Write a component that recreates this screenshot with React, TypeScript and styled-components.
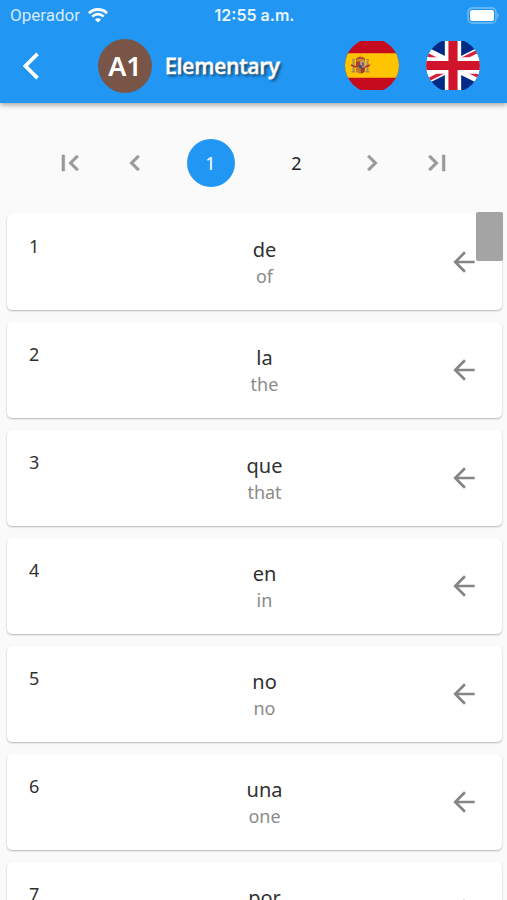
import React from "react";
import styled, { createGlobalStyle } from "styled-components";

const GlobalStyle = createGlobalStyle`
  * { box-sizing: border-box; }
  body {
    margin: 0;
    background: #fafafa;
    font-family: "Noto Sans", "Open Sans", sans-serif;
    color: #303030;
  }
  button {
    border: 0;
    padding: 0;
    background: none;
    font: inherit;
    color: inherit;
    cursor: pointer;
  }
  svg { display: block; }
`;

const Screen = styled.div`
  height: 100vh;
  display: flex;
  flex-direction: column;
  overflow: hidden;
`;

const Header = styled.header`
  flex: none;
  background: #2196f3;
  color: #fff;
  box-shadow: 0 2px 5px rgba(0, 0, 0, 0.35);
  z-index: 1;
`;

const StatusBar = styled.div`
  display: grid;
  grid-template-columns: 1fr auto 1fr;
  align-items: center;
  height: 30px;
  padding: 0 8px 0 10px;
  font-family: Inter, sans-serif;
  font-size: 16px;
`;

const Carrier = styled.div`
  display: flex;
  align-items: center;
  gap: 8px;
  font-family: Roboto, sans-serif;
  font-size: 17px;

  span { opacity: 0.8; }
`;

const Clock = styled.time`
  font-weight: 600;
  opacity: 0.9;
`;

const Battery = styled.svg`
  justify-self: end;
`;

const Toolbar = styled.div`
  display: flex;
  align-items: center;
  height: 73px;
  padding: 0 27px 2px 23px;
`;

const BackButton = styled.button`
  width: 75px;
  height: 48px;
  display: flex;
  align-items: center;
  stroke: currentColor;
`;

const LevelBadge = styled.div`
  display: flex;
  align-items: center;
  justify-content: center;
  width: 54px;
  height: 54px;
  border-radius: 50%;
  background: #795548;
  font-size: 27px;
  font-weight: 600;
`;

const Title = styled.h1`
  flex: 1;
  margin: 0 0 0 13px;
  font-size: 21px;
  line-height: 30px;
  font-weight: 500;
  text-shadow: 2px 2px 3px rgba(0, 0, 0, 0.65);
  -webkit-text-stroke: 1px #fff;
  paint-order: stroke fill;
`;

const Flags = styled.div`
  display: flex;
  gap: 27px;
`;

const Pager = styled.nav`
  flex: none;
  display: flex;
  justify-content: center;
  align-items: center;
  height: 111px;
  padding-top: 8px;
`;

const StepButton = styled.button`
  display: flex;
  align-items: center;
  justify-content: center;
  width: 65px;
  height: 48px;
  color: #999;
  stroke: currentColor;
`;

const PageButton = styled.button<{ $active?: boolean }>`
  width: 48px;
  height: 48px;
  margin: 0 19px;
  border-radius: 50%;
  font-size: 18px;
  background: ${(p) => (p.$active ? "#2196f3" : "transparent")};
  color: ${(p) => (p.$active ? "#fff" : "#222")};
`;

const ListArea = styled.main`
  flex: 1;
  min-height: 0;
  overflow: hidden;
`;

const WordList = styled.ol`
  display: flex;
  flex-direction: column;
  gap: 12px;
  list-style: none;
  margin: 0;
  padding: 0 5px 0 7px;
`;

const Card = styled.li`
  flex: none;
  display: grid;
  grid-template-columns: 52px 1fr 32px;
  align-items: center;
  height: 96px;
  padding: 0 22px;
  border-radius: 5px;
  background: #fff;
  box-shadow: 0 1px 2px rgba(0, 0, 0, 0.28);
`;

const Rank = styled.span`
  align-self: start;
  padding-top: 19px;
  font-size: 18px;
  line-height: 27px;
`;

const Entry = styled.div`
  padding-top: 2px;
  text-align: center;
  line-height: 27px;
`;

const Word = styled.div`
  font-size: 20px;
`;

const Translation = styled.div`
  font-size: 18px;
  color: #8a8a8a;
`;

const RevealButton = styled.button`
  color: #858585;
`;

const ListFrame = styled.div`
  position: relative;
  flex: 1;
  min-height: 0;
  display: flex;
  flex-direction: column;
`;

const ScrollThumb = styled.div`
  position: absolute;
  top: -2px;
  right: 4px;
  width: 27px;
  height: 49px;
  border-radius: 2px;
  background: #a4a4a4;
`;

const Icon = ({ d }: { d: string }) => (
  <svg width="32" height="32" viewBox="0 0 24 24" fill="currentColor" strokeWidth="0.4" overflow="visible" aria-hidden="true">
    <path d={d} />
  </svg>
);

const icons = {
  back: "M11.67 3.87L9.9 2.1 0 12l9.9 9.9 1.77-1.77L3.54 12z",
  first: "M18.41 16.59L13.82 12l4.59-4.59L17 6l-6 6 6 6zM6 6h2v12H6z",
  previous: "M15.41 7.41L14 6l-6 6 6 6 1.41-1.41L10.83 12z",
  next: "M10 6L8.59 7.41 13.17 12l-4.58 4.59L10 18l6-6z",
  last: "M5.59 7.41L10.18 12l-4.59 4.59L7 18l6-6-6-6zM16 6h2v12h-2z",
  arrow: "M20 11H7.83l5.59-5.59L12 4l-8 8 8 8 1.41-1.41L7.83 13H20v-2z",
};

const WifiIcon = () => (
  <svg width="20" height="15" viewBox="0 0 20 15" fill="none" stroke="#fff" aria-hidden="true">
    <path d="M1 5.2C6 .2 14 .2 19 5.2" strokeWidth="2.9" />
    <path d="M4.3 8.6c3.3-3.2 8.1-3.2 11.4 0" strokeWidth="2.7" />
    <path d="M10 14.6L6.9 11.4c1.8-1.6 4.4-1.6 6.2 0z" fill="#fff" stroke="none" />
  </svg>
);

const BatteryIcon = () => (
  <Battery width="33" height="17" viewBox="0 0 33 17" aria-hidden="true">
    <rect x="2" y="1" width="28" height="15" rx="4" fill="none" stroke="#fff" strokeOpacity="0.4" strokeWidth="1.3" />
    <rect x="4" y="3" width="24" height="11" rx="2" fill="#fff" />
    <path d="M31.3 6v5c1.8-.8 1.8-4.2 0-5z" fill="#fff" fillOpacity="0.4" />
  </Battery>
);

const SpainFlag = () => (
  <svg width="54" height="49" viewBox="0 0 54 49" role="img" aria-label="Español">
    <clipPath id="es-round"><circle cx="27" cy="24.5" r="27" /></clipPath>
    <g clipPath="url(#es-round)">
      <path fill="#c60b1e" d="M0 0h54v49H0z" />
      <path fill="#ffc400" d="M0 12.2h54v24.6H0z" />
      <g fill="#a88a5c">
        <path d="M7.5 20h2v10h-2zM21.5 20h2v10h-2z" />
        <path d="M6.5 30h4v1.6h-4zM20.5 30h4v1.6h-4zM7 18h3v1.4H7zM21 18h3v1.4h-3z" />
      </g>
      <path d="M6 24l5 2M20 26l5-2" stroke="#b5303a" strokeWidth="1.4" />
      <path fill="#b04a32" d="M11 19.5c-.5-3 2-3.8 4.5-3.8s5 .8 4.5 3.8z" />
      <path fill="#c58a2a" d="M12 18h7v1.4h-7zM14.9 14.5h1.2v2h-1.2z" />
      <path fill="#ad3a2e" d="M11 20.2h4.5v6H11z" />
      <path fill="#a99a9c" d="M15.5 20.2H20v6h-4.5z" />
      <path fill="#c17a24" d="M11 26.2h4.5v6.3c-2.8 0-4.5-1.3-4.5-3.5z" />
      <path fill="#9b3b3b" d="M15.5 26.2H20V29c0 2.2-1.7 3.5-4.5 3.5z" />
      <ellipse cx="15.5" cy="25.8" rx="1.5" ry="1.8" fill="#35507a" />
      <path fill="#8e4a55" d="M17 21.5h1.8V25H17zM12.3 21.8h1.8v2.6h-1.8z" />
    </g>
  </svg>
);

const BritainFlag = () => (
  <svg width="54" height="49" viewBox="13.5 0 33 30" role="img" aria-label="English">
    <clipPath id="gb-round"><circle cx="30" cy="15" r="16.5" /></clipPath>
    <clipPath id="gb-saltire"><path d="M30 15h30v15zv15H0zH0V0zV0h30z" /></clipPath>
    <g clipPath="url(#gb-round)">
      <path fill="#012a86" d="M0 0h60v30H0z" />
      <path d="M0 0l60 30m0-30L0 30" stroke="#fff" strokeWidth="6" />
      <path d="M0 0l60 30m0-30L0 30" clipPath="url(#gb-saltire)" stroke="#d4213d" strokeWidth="4" />
      <path d="M30 0v30M0 15h60" stroke="#fff" strokeWidth="10" />
      <path d="M30 0v30M0 15h60" stroke="#d0142c" strokeWidth="5.6" />
    </g>
  </svg>
);

const words = [
  ["de", "of"],
  ["la", "the"],
  ["que", "that"],
  ["en", "in"],
  ["no", "no"],
  ["una", "one"],
  ["por", "for"],
];

export default function App() {
  return (
    <Screen>
      <GlobalStyle />
      <Header>
        <StatusBar>
          <Carrier>
            <span>Operador</span>
            <WifiIcon />
          </Carrier>
          <Clock>12:55 a.m.</Clock>
          <BatteryIcon />
        </StatusBar>
        <Toolbar>
          <BackButton aria-label="Back"><Icon d={icons.back} /></BackButton>
          <LevelBadge>A1</LevelBadge>
          <Title>Elementary</Title>
          <Flags>
            <button aria-label="Spanish"><SpainFlag /></button>
            <button aria-label="English"><BritainFlag /></button>
          </Flags>
        </Toolbar>
      </Header>
      <Pager aria-label="Pages">
        <StepButton aria-label="First page"><Icon d={icons.first} /></StepButton>
        <StepButton aria-label="Previous page"><Icon d={icons.previous} /></StepButton>
        <PageButton $active aria-current="page">1</PageButton>
        <PageButton>2</PageButton>
        <StepButton aria-label="Next page"><Icon d={icons.next} /></StepButton>
        <StepButton aria-label="Last page"><Icon d={icons.last} /></StepButton>
      </Pager>
      <ListFrame>
        <ListArea>
          <WordList>
            {words.map(([word, translation], i) => (
              <Card key={word}>
                <Rank>{i + 1}</Rank>
                <Entry>
                  <Word lang="es">{word}</Word>
                  <Translation>{translation}</Translation>
                </Entry>
                <RevealButton aria-label={`Open ${word}`}><Icon d={icons.arrow} /></RevealButton>
              </Card>
            ))}
          </WordList>
        </ListArea>
        <ScrollThumb />
      </ListFrame>
    </Screen>
  );
}
